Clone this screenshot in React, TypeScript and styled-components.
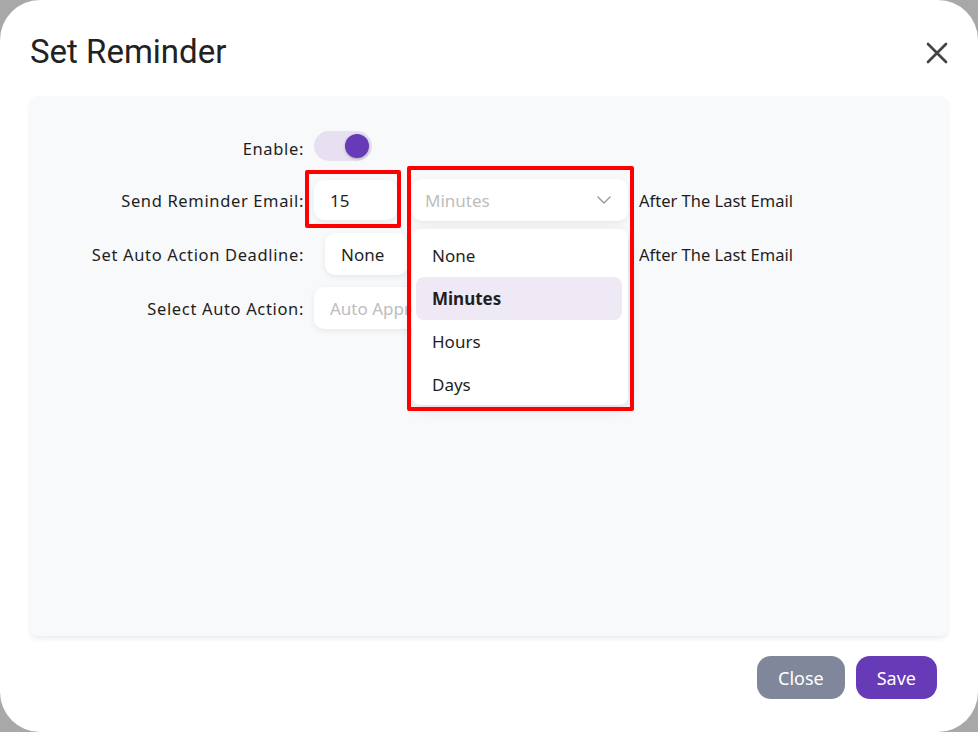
import styled, { createGlobalStyle } from "styled-components";

const GlobalStyle = createGlobalStyle`
  html, body {
    margin: 0;
    padding: 0;
    background: #a8a8a8;
  }
  * {
    box-sizing: border-box;
  }
`;

const units = ["None", "Minutes", "Hours", "Days"];

export default function App() {
  return (
    <>
      <GlobalStyle />
      <Dialog>
        <Header>
          <Title>Set Reminder</Title>
          <CloseIcon aria-label="close">
            <svg width="22" height="22" viewBox="0 0 22 22">
              <path d="M2 2 L20 20 M20 2 L2 20" stroke="#444" strokeWidth="2.7" strokeLinecap="round" />
            </svg>
          </CloseIcon>
        </Header>

        <Panel>
          <Form>
            <Label $below={1}>Enable:</Label>
            <Field $below={6}>
              <Toggle>
                <Knob />
              </Toggle>
            </Field>

            <Label>Send Reminder Email:</Label>
            <Field>
              <NumberBox $height={40}>15</NumberBox>
              <SelectWrap>
                <Select>
                  <Placeholder>Minutes</Placeholder>
                  <Chevron width="16" height="10" viewBox="0 0 16 10">
                    <path d="M1.5 1.5 L8 8 L14.5 1.5" fill="none" stroke="#9a9a9a" strokeWidth="1.4" />
                  </Chevron>
                </Select>
                <Menu>
                  {units.map((u) => (
                    <MenuItem key={u} $active={u === "Minutes"}>
                      {u}
                    </MenuItem>
                  ))}
                </Menu>
                <Highlight $top={-13} $left={-5} $width={227} $height={245} />
              </SelectWrap>
              <Suffix>After The Last Email</Suffix>
            </Field>

            <Label>Set Auto Action Deadline:</Label>
            <Field>
              <NumberBox $offset={11}>None</NumberBox>
              <Select $width={205} />
              <Suffix>After The Last Email</Suffix>
            </Field>

            <Label>Select Auto Action:</Label>
            <Field>
              <TextBox>
                <Placeholder>Auto Approve</Placeholder>
              </TextBox>
            </Field>
          </Form>
          <Highlight $top={74} $left={275} $width={96} $height={58} />
        </Panel>

        <Footer>
          <Button $variant="secondary">Close</Button>
          <Button>Save</Button>
        </Footer>
      </Dialog>
    </>
  );
}

const Dialog = styled.div`
  width: 978px;
  height: 732px;
  background: #ffffff;
  border-radius: 40px;
  display: flex;
  flex-direction: column;
  font-family: "Noto Sans", "Open Sans", sans-serif;
  color: #1f1f1f;
  overflow: hidden;
`;

const Header = styled.div`
  display: flex;
  align-items: center;
  justify-content: space-between;
  height: 96px;
  padding: 0 30px 0 30px;
`;

const Title = styled.h1`
  margin: 6px 0 0 0;
  font-family: Roboto, "Open Sans", sans-serif;
  font-weight: 400;
  font-size: 33px;
  color: #222;
`;

const CloseIcon = styled.div`
  display: flex;
  margin: 10px 0 0 0;
`;

const Panel = styled.div`
  position: relative;
  margin: 0 30px;
  height: 540px;
  background: #f8f9fb;
  border-radius: 8px;
  box-shadow: 0 3px 5px rgba(0, 0, 0, 0.07);
  padding-top: 35px;
`;

const Form = styled.div`
  display: grid;
  grid-template-columns: 274px 1fr;
  column-gap: 10px;
  row-gap: 12px;
  align-items: center;
`;

const Label = styled.div<{ $below?: number }>`
  text-align: right;
  font-size: 16.5px;
  letter-spacing: 0.65px;
  color: #1e1e1e;
  margin-bottom: ${(p) => p.$below ?? 0}px;
`;

const Field = styled.div<{ $below?: number }>`
  display: flex;
  align-items: center;
  min-height: 30px;
  margin-bottom: ${(p) => p.$below ?? 0}px;
`;

const Toggle = styled.div`
  width: 58px;
  height: 30px;
  border-radius: 15px;
  background: #e6e0f1;
  display: flex;
  align-items: center;
  justify-content: flex-end;
  padding-right: 3px;
`;

const Knob = styled.div`
  width: 24px;
  height: 24px;
  border-radius: 50%;
  background: #673ab7;
  box-shadow: 0 1px 3px rgba(0, 0, 0, 0.25);
`;

const boxBase = `
  background: #ffffff;
  border-radius: 10px;
  box-shadow: 0 2px 6px rgba(0, 0, 0, 0.07);
  display: flex;
  align-items: center;
  font-size: 17px;
`;

const NumberBox = styled.div<{ $offset?: number; $height?: number }>`
  ${boxBase}
  height: ${(p) => p.$height ?? 42}px;
  width: 83px;
  padding-left: 16px;
  margin-left: ${(p) => p.$offset ?? 0}px;
  color: #1f1f1f;
`;

const TextBox = styled.div`
  ${boxBase}
  height: 42px;
  width: 300px;
  padding-left: 16px;
`;

const SelectWrap = styled.div`
  position: relative;
  margin-left: 15px;
`;

const Select = styled.div<{ $width?: number }>`
  ${boxBase}
  height: 42px;
  width: ${(p) => p.$width ?? 216}px;
  padding: 0 16px 0 13px;
  justify-content: space-between;
  margin-left: ${(p) => (p.$width ? 15 : 0)}px;
`;

const Placeholder = styled.span`
  color: #bdbdbd;
`;

const Chevron = styled.svg`
  display: block;
`;

const Suffix = styled.span`
  margin-left: 11px;
  font-size: 16.5px;
  color: #1e1e1e;
`;

const Menu = styled.div`
  position: absolute;
  top: 50px;
  left: 0;
  width: 216px;
  height: 176px;
  background: #ffffff;
  border-radius: 8px;
  box-shadow: 0 4px 14px rgba(0, 0, 0, 0.12);
  padding: 5px 6px 0 4px;
  z-index: 2;
`;

const MenuItem = styled.div<{ $active?: boolean }>`
  height: 43px;
  display: flex;
  align-items: center;
  padding-left: 16px;
  border-radius: 8px;
  font-size: 17px;
  font-weight: ${(p) => (p.$active ? 700 : 400)};
  background: ${(p) => (p.$active ? "#efe9f6" : "transparent")};
  color: #1f1f1f;
`;

const Highlight = styled.div<{ $top: number; $left: number; $width: number; $height: number }>`
  position: absolute;
  top: ${(p) => p.$top}px;
  left: ${(p) => p.$left}px;
  width: ${(p) => p.$width}px;
  height: ${(p) => p.$height}px;
  border: 4px solid #ff0000;
  border-radius: 2px;
  z-index: 3;
  pointer-events: none;
`;

const Footer = styled.div`
  display: flex;
  justify-content: flex-end;
  gap: 11px;
  padding: 20px 41px 0 0;
`;

const Button = styled.button<{ $variant?: "secondary" }>`
  height: 43px;
  padding: 0 21px;
  border: none;
  border-radius: 14px;
  font-family: "Noto Sans", "Open Sans", sans-serif;
  font-size: 18px;
  color: #ffffff;
  background: ${(p) => (p.$variant === "secondary" ? "#80879a" : "#673ab7")};
`;
